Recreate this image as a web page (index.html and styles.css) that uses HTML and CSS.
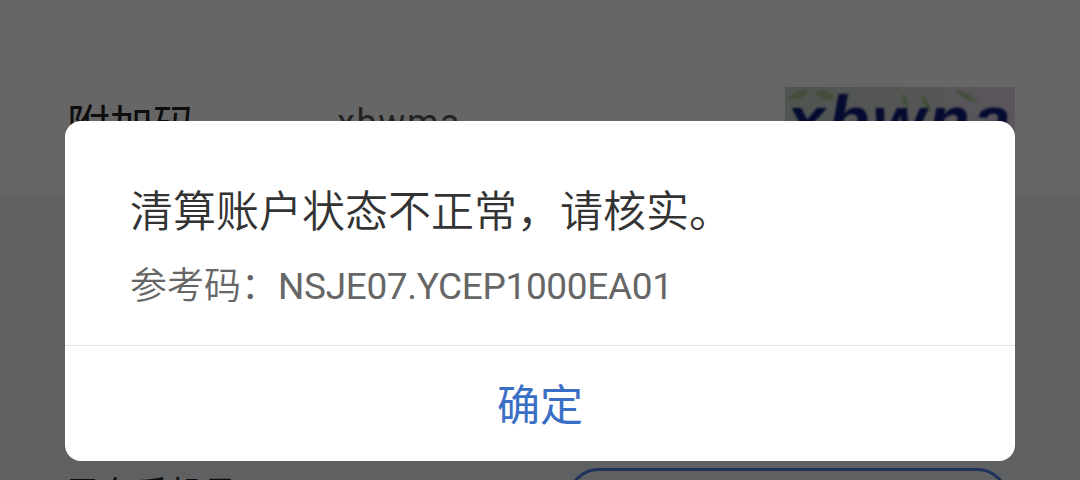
FILE: index.html
```html
<!DOCTYPE html>
<html lang="zh">
<head>
<meta charset="utf-8">
<title>清算账户状态</title>
<link rel="stylesheet" href="styles.css">
</head>
<body>
<main class="page">
  <section class="code-row">
    <span class="label">附加码</span>
    <span class="value">xbwma</span>
    <div class="captcha" aria-hidden="true">
      <svg class="leaves" viewBox="0 0 230 50" width="230" height="50">
        <path d="M3 12 Q12 0 24 4 Q18 14 3 12Z M30 6 Q42 -2 50 12 Q38 14 30 6Z M118 6 Q124 12 122 22 Q114 14 118 6Z M136 8 Q146 14 146 26 Q136 18 136 8Z M170 2 Q184 6 194 16 Q178 14 170 2Z"/>
      </svg>
      <span class="captcha-text">xbwna</span>
    </div>
  </section>
  <section class="phone-row">
    <span class="label">已有手机号</span>
    <div class="outline-btn"></div>
  </section>
</main>
<div class="overlay">
  <div class="dialog">
    <div class="body">
      <p class="title">清算账户状态不正常，请核实。</p>
      <p class="ref">参考码：<span class="ref-code">NSJE07.YCEP1000EA01</span></p>
    </div>
    <button class="confirm" type="button">确定</button>
  </div>
</div>
</body>
</html>
```

FILE: styles.css
```css
* { box-sizing: border-box; margin: 0; padding: 0; }
html, body { width: 1080px; height: 480px; overflow: hidden; }
body { font-family: "Noto Sans CJK SC", "Roboto", sans-serif; background: #eef0f2; }
.page { height: 480px; display: flex; flex-direction: column; overflow: hidden; }
.code-row {
  flex: none;
  height: 197px;
  background: #fff;
  padding: 87px 65px 0 67px;
  display: flex;
  align-items: flex-start;
}
.label { font-size: 43px; line-height: 60px; color: #222; }
.code-row .label { margin-top: 5px; width: 270px; flex: none; }
.value { font-size: 36px; line-height: 60px; color: #555; font-family: "Roboto", sans-serif; margin-top: 6px; letter-spacing: 1.6px; }
.captcha {
  margin-left: auto;
  position: relative;
  width: 230px;
  height: 80px;
  overflow: hidden;
  background: linear-gradient(90deg, #c8d4cc, #d4d8d4 55%, #e4d4ea);
}
.leaves { position: absolute; left: 0; top: 0; fill: #a5c48e; filter: blur(1px); }
.captcha-text {
  position: absolute;
  left: 2px;
  top: -7px;
  font: italic bold 68px/80px "Liberation Sans", sans-serif;
  letter-spacing: 3px;
  color: #0d1a78;
  filter: blur(0.8px);
}
.phone-row {
  flex: none;
  height: 283px;
  padding: 271px 71px 0 67px;
  display: flex;
  justify-content: space-between;
  align-items: flex-start;
  overflow: hidden;
}
.phone-row .label { margin-top: -1px; line-height: 50px; font-size: 34px; }
.outline-btn {
  width: 442px;
  height: 80px;
  border: 3px solid #4f7fe0;
  border-radius: 32px;
  flex: none;
}
.overlay {
  position: fixed;
  inset: 0;
  background: rgba(0, 0, 0, 0.6);
  display: flex;
  justify-content: center;
  padding-top: 121px;
}
.dialog {
  width: 950px;
  height: 340px;
  background: #fff;
  border-radius: 16px;
  display: flex;
  flex-direction: column;
}
.body { flex: 1; padding: 55px 65px 0; border-bottom: 1px solid #e4e4e4; }
.title { font-size: 43px; line-height: 64px; color: #333; white-space: nowrap; font-weight: 350; }
.ref { margin-top: 18px; font-size: 37px; line-height: 50px; color: #666; white-space: nowrap; font-weight: 350; }
.ref-code { font-family: "Roboto", sans-serif; letter-spacing: -0.35px; font-weight: 400; }
.confirm {
  height: 115px;
  border: 0;
  background: none;
  font: 400 43px/1 "Noto Sans CJK SC", sans-serif;
  color: #3a6fc6;
  padding-bottom: 3px;
}
```
